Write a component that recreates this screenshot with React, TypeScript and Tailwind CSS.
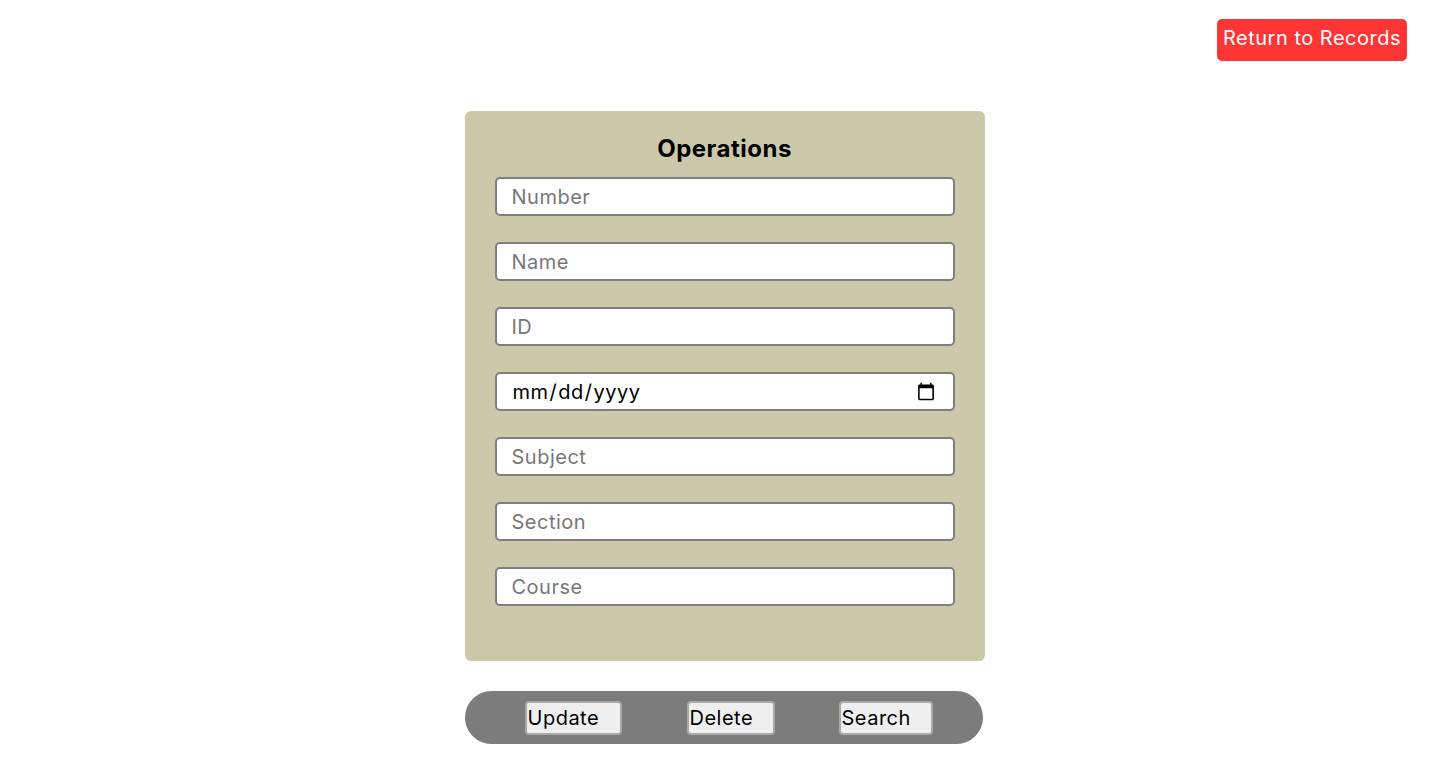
import React from "react";

const fields = ["Number", "Name", "ID", "date", "Subject", "Section", "Course"];

export default function App() {
  return (
    <div
      className="min-h-[772px] w-full bg-white tracking-[0.5px]"
      style={{ fontFamily: "Inter, 'Noto Sans', sans-serif" }}
    >
      <div className="flex justify-end pr-[26px] pt-[19px]">
        <button className="h-[42px] w-[190px] rounded-[5px] bg-[#fd3535] pb-[4px] text-[20px] text-white">
          Return to Records
        </button>
      </div>
      <div className="flex flex-col items-center pl-[16px] pt-[50px]">
        <div className="flex h-[550px] w-[520px] flex-col items-center rounded-[6px] bg-[#ccc8aa] pt-[20px]">
          <h2 className="h-[46px] text-[24px] font-bold leading-[36px] text-black">Operations</h2>
          <div className="flex flex-col gap-[26px]">
            {fields.map((f) =>
              f === "date" ? (
                <input
                  key={f}
                  type="date"
                  className="h-[39px] w-[460px] rounded-[5px] border-2 border-[#7f7f7f] bg-white px-[15px] text-[20px] text-black outline-none"
                />
              ) : (
                <input
                  key={f}
                  placeholder={f}
                  className="h-[39px] w-[460px] rounded-[5px] border-2 border-[#7f7f7f] bg-white px-[15px] text-[20px] text-black outline-none placeholder:text-[#777777]"
                />
              )
            )}
          </div>
        </div>
        <div className="mt-[30px] mr-[2px] flex h-[53px] w-[518px] items-center rounded-full bg-[#7d7c7c] pl-[60px]">
          <button className="h-[34px] w-[97px] rounded-[4px] border-2 border-[#a9a9a9] bg-[#efefef] pl-[1px] text-left text-[20px] text-black">
            Update
          </button>
          <button className="ml-[65px] h-[34px] w-[88px] rounded-[4px] border-2 border-[#a9a9a9] bg-[#efefef] pl-[1px] text-left text-[20px] text-black">
            Delete
          </button>
          <button className="ml-[64px] h-[34px] w-[94px] rounded-[4px] border-2 border-[#a9a9a9] bg-[#efefef] pl-[1px] text-left text-[20px] text-black">
            Search
          </button>
        </div>
      </div>
    </div>
  );
}
